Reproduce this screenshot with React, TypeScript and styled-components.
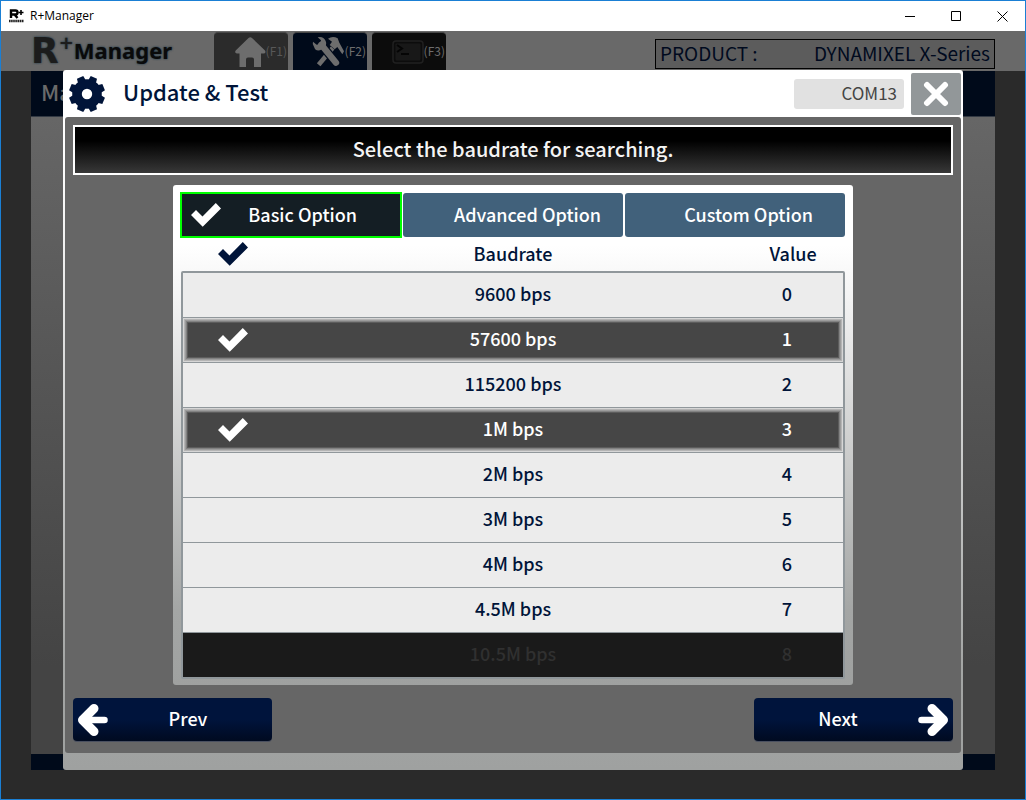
import React, { useState } from "react";
import styled, { createGlobalStyle } from "styled-components";

const NAVY = "#001439";
const UI_FONT = `"Noto Sans CJK KR", "Noto Sans", sans-serif`;

const GlobalStyle = createGlobalStyle`
  *, *::before, *::after { box-sizing: border-box; }
  body { margin: 0; background: #2a2a2a; font-family: ${UI_FONT}; }
  button { font: inherit; color: inherit; border: 0; padding: 0; background: none; cursor: pointer; }
`;

const Window = styled.div`
  min-height: 100vh;
  display: flex;
  flex-direction: column;
  border: 1px solid #1a7fd4;
  background: #2a2a2a;
`;

const TitleBar = styled.header`
  height: 30px;
  display: flex;
  align-items: center;
  padding-left: 8px;
  gap: 6px;
  background: #fff;
`;

const AppIcon = styled.span`
  width: 15px;
  height: 15px;
  display: grid;
  justify-items: center;
  align-content: start;
  color: #000;
`;

const WindowTitle = styled.span`
  flex: 1;
  font: 12px/16px "Open Sans", sans-serif;
  color: #000;
`;

const WindowControls = styled.div`
  display: flex;
`;

const WindowControl = styled.button`
  width: 46px;
  height: 29px;
  display: grid;
  place-items: center;
`;

const Stage = styled.div`
  flex: 1;
  display: grid;
  grid-template: 1fr / 1fr;
`;

const Backdrop = styled.div`
  grid-area: 1 / 1;
  min-width: 0;
  display: flex;
  flex-direction: column;
  padding-bottom: 29px;
`;

const AppBar = styled.div`
  height: 40px;
  padding: 0 30px;
  display: flex;
  background: #696969;
`;

const Logo = styled.div`
  width: 183px;
  display: flex;
  align-items: flex-start;
  color: #0a0a0a;
  text-shadow: 0 0 2px #2f4450, 0 0 2px #2f4450;
  font-weight: 700;
  line-height: 40px;
`;

const LogoLetter = styled.span`
  font-family: "DejaVu Sans", sans-serif;
  font-size: 36px;
  color: #1c1c1c;
`;

const LogoPlus = styled.span`
  font-family: "DejaVu Sans", sans-serif;
  font-size: 18px;
  line-height: 24px;
  color: #1c1c1c;
`;

const LogoWord = styled.span`
  font-family: "Noto Sans", sans-serif;
  font-size: 22px;
  line-height: 38px;
`;

const NavTabs = styled.nav`
  display: flex;
  gap: 5px;
  padding-top: 1px;
`;

const NavTab = styled.button<{ $bg: string; $fg: string }>`
  width: 74px;
  display: flex;
  align-items: center;
  justify-content: flex-end;
  padding-right: 1px;
  border-radius: 4px 4px 0 0;
  border-top: 1px solid #484848;
  background: ${(p) => p.$bg};
  color: ${(p) => p.$fg};
  font-size: 12px;
`;

const NavKey = styled.span`
  padding-bottom: 3px;
`;

const Product = styled.div`
  width: 340px;
  height: 30px;
  margin: 8px 0 0 auto;
  padding: 0 4px;
  display: flex;
  align-items: center;
  justify-content: space-between;
  border: 1px solid #000;
  background: #5c5c5c;
  color: #000a1e;
  font-size: 19px;
  line-height: 24px;
  padding-bottom: 3px;
  white-space: nowrap;
`;

const Page = styled.div`
  flex: 1;
  margin: 0 30px;
  display: flex;
  flex-direction: column;
  background: linear-gradient(#696969, #575757 40%, #444 85%);
`;

const PageHeader = styled.div`
  height: 46px;
  padding-left: 10px;
  border-bottom: 1px solid #333a44;
  background: #000a1a;
  color: #6a6a6a;
  font-size: 22px;
  font-weight: 500;
  line-height: 40px;
`;

const PageFooter = styled.div`
  height: 16px;
  margin-top: auto;
  background: #000a1a;
`;

const frameGradient = "linear-gradient(#fff 12%, #f0f0f0 25%, #a4a6a5 85%, #9fa1a0)";

const Dialog = styled.section`
  grid-area: 1 / 1;
  z-index: 1;
  min-width: 0;
  margin: 39px 62px 29px;
  padding: 0 2px 17px;
  display: flex;
  flex-direction: column;
  border-radius: 3px;
  background: ${frameGradient};
`;

const DialogHeader = styled.header`
  height: 47px;
  padding-left: 4px;
  display: flex;
  align-items: center;
`;

const DialogTitle = styled.h1`
  flex: 1;
  margin: 0;
  padding: 0 0 5px 18px;
  font-size: 22px;
  line-height: 32px;
  font-weight: 500;
  color: ${NAVY};
`;

const Port = styled.output`
  width: 110px;
  height: 30px;
  padding-right: 7px;
  border-radius: 3px;
  background: #e1e1e1;
  color: #444;
  font-size: 17px;
  line-height: 27px;
  text-align: right;
`;

const CloseButton = styled.button`
  width: 50px;
  height: 42px;
  margin-left: 7px;
  display: grid;
  place-items: center;
  border-radius: 2px;
  background: #929799;
`;

const DialogBody = styled.div`
  flex: 1;
  display: flex;
  flex-direction: column;
  padding: 8px 8px 12px;
  border-radius: 3px;
  background: #666;
`;

const Message = styled.p`
  height: 50px;
  margin: 0;
  border: 2px solid #fff;
  background: linear-gradient(#000 30%, #383838);
  color: #f4f4f4;
  font-size: 20px;
  font-weight: 500;
  line-height: 44px;
  text-align: center;
`;

const Panel = styled.div`
  width: 100%;
  max-width: 680px;
  margin: 10px auto 13px;
  padding: 8px 8px 6px;
  border-radius: 3px;
  background: ${frameGradient};
`;

const OptionTabs = styled.div`
  display: grid;
  grid-template-columns: repeat(3, 1fr);
  gap: 2px;
`;

const OptionTab = styled.button<{ $active: boolean }>`
  height: 44px;
  padding: 0 ${(p) => (p.$active ? 44 : 10)}px 0 ${(p) => (p.$active ? 10 : 40)}px;
  display: flex;
  align-items: center;
  justify-content: space-between;
  border-radius: ${(p) => (p.$active ? 0 : 3)}px;
  outline: ${(p) => (p.$active ? "2px solid #0f0" : "none")};
  outline-offset: -1px;
  background: ${(p) => (p.$active ? "#141e24" : "#41617b")};
  color: #fff;
  font-size: 18px;
  font-weight: 500;
`;

const OptionLabel = styled.span<{ $inset: number }>`
  margin-left: auto;
  padding: 0 ${(p) => p.$inset}px 3px 0;
`;

const RateTable = styled.table`
  display: block;
  color: ${NAVY};
  font-size: 18px;
  font-weight: 500;
  line-height: 31px;
`;

const RateHead = styled.thead`
  display: block;
  padding: 0 2px;
`;

const RateBody = styled.tbody`
  display: block;
  border: 2px solid #90979b;
  border-radius: 2px;
`;

const RateRow = styled.tr`
  display: grid;
  grid-template-columns: 100px 1fr 100px;
  align-items: center;
  text-align: center;
`;

const HeadCell = styled.th`
  height: 34px;
  padding: 0 0 1px;
  font-weight: 500;
  display: grid;
  place-items: center;
`;

const RateItem = styled(RateRow)<{ $state: "normal" | "selected" | "disabled" }>`
  height: 45px;
  border-bottom: 1px solid #90979b;
  background: ${(p) => ({ normal: "#ececec", selected: "#464646", disabled: "#1a1a1a" })[p.$state]};
  color: ${(p) => ({ normal: NAVY, selected: "#fff", disabled: "#303030" })[p.$state]};
  box-shadow: ${(p) =>
    p.$state === "selected"
      ? "inset 0 0 0 1px #d6d6d6, inset 0 0 0 2px #b4b4b4, inset 0 0 0 3px #9c9c9c, inset 0 0 0 4px #828282, inset 0 0 0 5px #5c5c5c"
      : "none"};
  &:last-child { height: 44px; border-bottom: 0; }
`;

const TickCell = styled.td`
  padding: 0;
`;

const RateCell = styled.td`
  padding: 0 0 4px;
`;

const ValueCell = styled.td`
  padding: 0 12px 4px 0;
`;

const Tick = styled.label`
  position: relative;
  height: 34px;
  display: grid;
  place-items: center;
`;

const TickInput = styled.input`
  position: absolute;
  inset: 0;
  width: 100%;
  height: 100%;
  margin: 0;
  opacity: 0;
`;

const Actions = styled.footer`
  display: flex;
  justify-content: space-between;
`;

const ActionButton = styled.button<{ $side: "left" | "right" }>`
  width: 199px;
  height: 43px;
  padding: 0 4px;
  display: flex;
  flex-direction: ${(p) => (p.$side === "left" ? "row" : "row-reverse")};
  align-items: center;
  border-radius: 4px;
  box-shadow: 0 1px 0 #4a5060;
  background: linear-gradient(#00143c 50%, #000a20);
  color: #fff;
  font-size: 18px;
  font-weight: 500;
`;

const ActionText = styled.span`
  flex: 1;
  padding-bottom: 3px;
  text-align: center;
`;

const CheckMark = ({ color = "#fff" }: { color?: string }) => (
  <svg width="30" height="24" viewBox="0 0 30 24" fill={color} aria-hidden="true">
    <path d="M0 12 5 7 11.5 13.5 24.8 0 30 5.5 11.7 23.7Z" />
  </svg>
);

const ArrowIcon = ({ flip = false }: { flip?: boolean }) => (
  <svg width="31" height="34" viewBox="0 0 31 34" fill="none" stroke="#fff" strokeLinecap="round" strokeLinejoin="round" aria-hidden="true">
    <g transform={flip ? "matrix(-1 0 0 1 31 0)" : undefined}>
      <path d="M17 5.5 5.5 17 17 28.5" strokeWidth="9" />
      <path d="M6 17H27.5" strokeWidth="6.5" />
    </g>
  </svg>
);

const GearIcon = () => (
  <svg width="36" height="36" viewBox="-18 -18 36 36" aria-hidden="true">
    <circle r="10" fill="none" stroke={NAVY} strokeWidth="9.6" />
    {[22.5, 67.5, 112.5, 157.5, 202.5, 247.5, 292.5, 337.5].map((a) => (
      <path key={a} d="M-4.2 -13 -3.4 -18H3.4L4.2 -13Z" fill={NAVY} transform={`rotate(${a})`} />
    ))}
  </svg>
);

const HomeIcon = () => (
  <svg width="31" height="31" viewBox="0 0 31 31" fill="#6d6d6d" aria-hidden="true">
    <path d="M13.5 1Q15.3-.3 17 1L30 13.5Q31.3 16 29 16.5H26V30H19V22.5Q19 20.5 17 20.5H13Q11 20.5 11 22.5V30H4.5V16.5H2Q-.8 16 .7 13.5Z" />
  </svg>
);

const ToolsIcon = () => (
  <svg width="33" height="32" viewBox="0 0 99 96" fill="none" aria-hidden="true">
    <path d="M20 86 62 36" stroke="#6d6d6d" strokeWidth="14" />
    <path d="M48 8Q62-2 77 7L82 20 96 46 91 55 76 33 68 40 53 27 60 17Z" fill="#6d6d6d" />
    <path d="M28 26 72 80" stroke="#000a1a" strokeWidth="26" strokeLinecap="round" />
    <path d="M28 26 72 80" stroke="#6d6d6d" strokeWidth="19" strokeLinecap="round" />
    <path d="M17 4Q34 0 41 15T30 40 6 32Q0 25 3 17L14 26 25 23 27 13Z" fill="#6d6d6d" />
  </svg>
);

const TerminalIcon = () => (
  <svg width="32" height="24" viewBox="0 0 32 24" fill="none" stroke="#202020" aria-hidden="true">
    <rect x="1" y="1" width="30" height="22" rx="3" strokeWidth="1.5" />
    <rect x="3.5" y="3.5" width="25" height="17" rx="1" fill="#181818" stroke="none" />
    <path d="M5 5 10 8.5 5 12" stroke="#050505" strokeWidth="2" />
    <path d="M9 14H17" stroke="#050505" strokeWidth="2" />
  </svg>
);

const RATES = [
  "9600 bps",
  "57600 bps",
  "115200 bps",
  "1M bps",
  "2M bps",
  "3M bps",
  "4M bps",
  "4.5M bps",
  "10.5M bps",
];
const DISABLED_RATE = 8;

export default function App() {
  const [selected, setSelected] = useState<number[]>([1, 3]);
  const toggle = (i: number) =>
    setSelected((s) => (s.includes(i) ? s.filter((v) => v !== i) : [...s, i]));

  return (
    <Window>
      <GlobalStyle />
      <TitleBar>
        <AppIcon>
          <svg width="15" height="15" viewBox="0 0 15 15" aria-hidden="true">
            <path d="M2 9V1.5H6.5Q8.5 1.5 8.5 3.5T6.5 5.5H2M5.5 5.5 8.5 9" fill="none" stroke="#000" strokeWidth="2.4" />
            <path d="M9.5 3.5H14.5M12 1V6" stroke="#000" strokeWidth="1.6" />
            <path d="M0 12H15" stroke="#222" strokeWidth="2.5" strokeDasharray="1.6 .5" />
          </svg>
        </AppIcon>
        <WindowTitle>R+Manager</WindowTitle>
        <WindowControls>
          <WindowControl aria-label="Minimize">
            <svg width="11" height="11" stroke="#000"><path d="M0 5.5H10" /></svg>
          </WindowControl>
          <WindowControl aria-label="Maximize">
            <svg width="11" height="11" stroke="#000" fill="none"><path d="M.5.5H9.5V9.5H.5Z" /></svg>
          </WindowControl>
          <WindowControl aria-label="Close window">
            <svg width="11" height="11" stroke="#000"><path d="M.5.5 10.5 10.5M10.5.5.5 10.5" /></svg>
          </WindowControl>
        </WindowControls>
      </TitleBar>

      <Stage>
        <Backdrop>
          <AppBar>
            <Logo>
              <LogoLetter>R</LogoLetter>
              <LogoPlus>+</LogoPlus>
              <LogoWord>Manager</LogoWord>
            </Logo>
            <NavTabs>
              <NavTab $bg="#2b2b2b" $fg="#585858"><HomeIcon /><NavKey>(F1)</NavKey></NavTab>
              <NavTab $bg="#000a1a" $fg="#6d6d6d"><ToolsIcon /><NavKey>(F2)</NavKey></NavTab>
              <NavTab $bg="#0c0c0c" $fg="#6d6d6d"><TerminalIcon /><NavKey>(F3)</NavKey></NavTab>
            </NavTabs>
            <Product>
              <span>PRODUCT :</span>
              <span>DYNAMIXEL X-Series</span>
            </Product>
          </AppBar>
          <Page>
            <PageHeader>Ma</PageHeader>
            <PageFooter />
          </Page>
        </Backdrop>

        <Dialog role="dialog" aria-labelledby="dialog-title">
          <DialogHeader>
            <GearIcon />
            <DialogTitle id="dialog-title">Update &amp; Test</DialogTitle>
            <Port>COM13</Port>
            <CloseButton aria-label="Close">
              <svg width="26" height="26" viewBox="0 0 26 26" stroke="#fff" strokeWidth="6" strokeLinecap="round" aria-hidden="true">
                <path d="M4 4 22 22M22 4 4 22" />
              </svg>
            </CloseButton>
          </DialogHeader>

          <DialogBody>
            <Message>Select the baudrate for searching.</Message>
            <Panel>
              <OptionTabs>
                <OptionTab $active>
                  <CheckMark />
                  <OptionLabel $inset={0}>Basic Option</OptionLabel>
                </OptionTab>
                <OptionTab $active={false}>
                  <OptionLabel $inset={12}>Advanced Option</OptionLabel>
                </OptionTab>
                <OptionTab $active={false}>
                  <OptionLabel $inset={22}>Custom Option</OptionLabel>
                </OptionTab>
              </OptionTabs>
              <RateTable>
                <RateHead>
                  <RateRow>
                    <HeadCell aria-label="Selected"><CheckMark color={NAVY} /></HeadCell>
                    <HeadCell>Baudrate</HeadCell>
                    <HeadCell>Value</HeadCell>
                  </RateRow>
                </RateHead>
                <RateBody>
                  {RATES.map((rate, i) => {
                    const disabled = i === DISABLED_RATE;
                    const on = selected.includes(i);
                    return (
                      <RateItem key={rate} $state={disabled ? "disabled" : on ? "selected" : "normal"}>
                        <TickCell>
                          <Tick>
                            <TickInput
                              type="checkbox"
                              aria-label={rate}
                              checked={on}
                              disabled={disabled}
                              onChange={() => toggle(i)}
                            />
                            {on && <CheckMark />}
                          </Tick>
                        </TickCell>
                        <RateCell>{rate}</RateCell>
                        <ValueCell>{i}</ValueCell>
                      </RateItem>
                    );
                  })}
                </RateBody>
              </RateTable>
            </Panel>
            <Actions>
              <ActionButton $side="left">
                <ArrowIcon />
                <ActionText>Prev</ActionText>
              </ActionButton>
              <ActionButton $side="right">
                <ArrowIcon flip />
                <ActionText>Next</ActionText>
              </ActionButton>
            </Actions>
          </DialogBody>
        </Dialog>
      </Stage>
    </Window>
  );
}
